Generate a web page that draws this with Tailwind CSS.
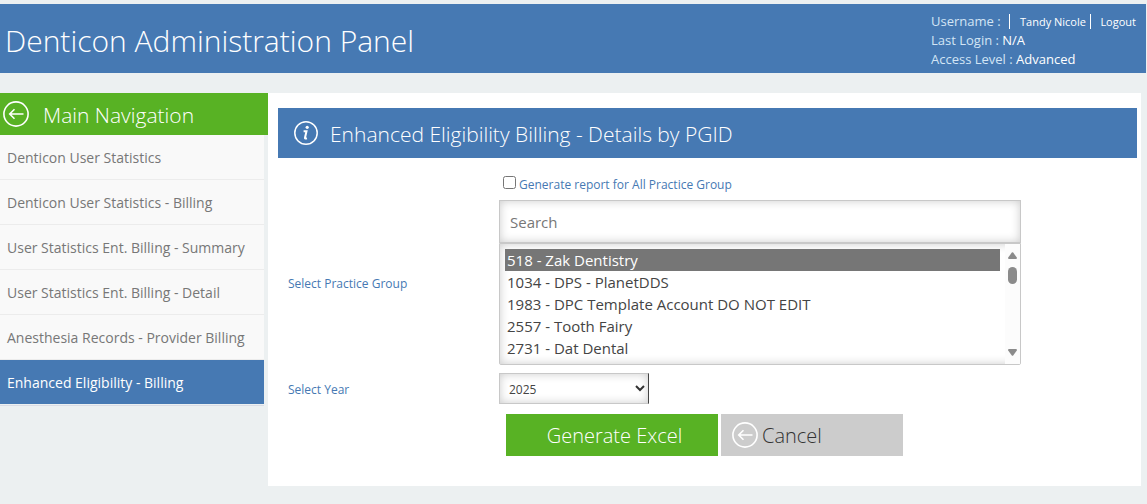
<!DOCTYPE html>
<html lang="en">
<head>
  <meta charset="UTF-8" />
  <meta name="viewport" content="width=device-width, initial-scale=1.0" />
  <title>Denticon Administration Panel</title>
  <script src="https://cdn.jsdelivr.net/npm/@tailwindcss/browser@4"></script>
</head>
<body class="bg-[#ecf0f1] pt-1 min-h-screen font-['Open_Sans',sans-serif] text-[#444]">

  <!-- Header -->
  <header class="flex items-center justify-between bg-[#4679b3] text-white h-[69px] mr-px pl-[5px] pr-[10px]">
    <h1 class="text-[30px] leading-10 font-light pt-1">Denticon Administration Panel</h1>
    <div class="w-[205px] shrink-0 pt-[3px] text-[13px] leading-[19px] text-[#d3e5f5] whitespace-nowrap">
      <div class="flex items-center">
        <span class="w-[78px]">Username :</span>
        <a href="#" class="border-l border-white pl-[10px] text-[11px] leading-[15px] text-white">Tandy Nicole</a>
        <a href="#" class="border-l border-white pl-[9px] ml-auto text-[11px] leading-[15px] text-white">Logout</a>
      </div>
      <div>Last Login : <span class="text-white">N/A</span></div>
      <div>Access Level : <span class="text-white">Advanced</span></div>
    </div>
  </header>

  <div class="flex items-start mt-5 mr-[6px]">

    <!-- Sidebar -->
    <aside class="w-[268px] shrink-0">
      <div class="flex items-center h-[42px] bg-[#58b224] text-white pl-[3px] gap-[14px]">
        <svg class="size-[26px]" viewBox="0 0 26 26" fill="none" stroke="currentColor" stroke-width="1.6">
          <circle cx="13" cy="13" r="12.1" />
          <path d="M20.5 13H7M11.5 8.2L6.7 13l4.8 4.8" />
        </svg>
        <h2 class="text-[21px] leading-7 font-light pt-[2px]">Main Navigation</h2>
      </div>
      <nav class="mr-1 text-[14px] text-[#777] whitespace-nowrap">
        <a href="#" class="flex items-center h-[45px] pl-[7px] bg-[#f9f9f9] border-b border-[#ececec]">Denticon User Statistics</a>
        <a href="#" class="flex items-center h-[45px] pl-[7px] bg-[#f9f9f9] border-b border-[#ececec]">Denticon User Statistics - Billing</a>
        <a href="#" class="flex items-center h-[45px] pl-[7px] bg-[#f9f9f9] border-b border-[#ececec]">User Statistics Ent. Billing - Summary</a>
        <a href="#" class="flex items-center h-[45px] pl-[7px] bg-[#f9f9f9] border-b border-[#ececec]">User Statistics Ent. Billing - Detail</a>
        <a href="#" class="flex items-center h-[45px] pl-[7px] bg-[#f9f9f9] border-b border-[#ececec]">Anesthesia Records - Provider Billing</a>
        <a href="#" class="flex items-center h-[44px] pl-[7px] bg-[#4679b3] text-white">Enhanced Eligibility - Billing</a>
        <div class="mt-px h-px bg-[#d9dce5]"></div>
      </nav>
    </aside>

    <!-- Content -->
    <main class="flex-1 bg-white pt-[15px] pl-[10px] pr-1 pb-[30px]">
      <div class="flex items-center h-[50px] bg-[#4679b3] text-white pl-4 gap-3">
        <svg class="size-6" viewBox="0 0 24 24" fill="none" stroke="currentColor">
          <circle cx="12" cy="12" r="11.2" stroke-width="1.5" />
          <circle cx="13.2" cy="6.3" r="1.6" fill="currentColor" stroke="none" />
          <path d="M9.6 10.2h2.9l-1.5 6.6q-.2 1.2 1.9.4" stroke-width="2" />
        </svg>
        <h2 class="text-[21px] leading-7 font-light pt-[2px]">Enhanced Eligibility Billing - Details by PGID</h2>
      </div>

      <form class="pl-[10px] mt-[15px] text-[12px] text-[#4679b3]">
        <div class="flex items-center h-[27px] pl-[215px] pb-1">
          <input type="checkbox" id="all-groups" class="size-[13px] mb-1" />
          <label for="all-groups" class="pl-[3px]">Generate report for All Practice Group</label>
        </div>

        <div class="flex items-center">
          <label for="practice-group" class="w-[211px] shrink-0 pt-[2px]">Select Practice Group</label>
          <div class="w-[522px]">
            <input type="text" placeholder="Search" aria-label="Search" class="block w-full h-[43px] border border-[#c8c8c8] pl-[10px] text-[15px] text-[#444] placeholder:text-[#777] shadow-[inset_0_0_10px_#ccc]" />
            <div class="relative">
              <select id="practice-group" size="5" class="block w-full h-[122px] border border-[#c8c8c8] rounded-b-[2px] py-[5px] pl-[5px] pr-5 text-[15px] text-[#444] shadow-[inset_0_0_10px_#ccc] overflow-hidden">
                <option selected class="h-[22px] leading-[22px] p-0 pt-px pl-[2px] checked:bg-[linear-gradient(#767676,#767676)] checked:text-white">518 - Zak Dentistry</option>
                <option class="h-[22px] leading-[22px] p-0 pt-px pl-[2px]">1034 - DPS - PlanetDDS</option>
                <option class="h-[22px] leading-[22px] p-0 pt-px pl-[2px]">1983 - DPC Template Account DO NOT EDIT</option>
                <option class="h-[22px] leading-[22px] p-0 pt-px pl-[2px]">2557 - Tooth Fairy</option>
                <option class="h-[22px] leading-[22px] p-0 pt-px pl-[2px]">2731 - Dat Dental</option>
              </select>
              <!-- scrollbar -->
              <div class="absolute inset-y-px right-px w-[15px] bg-[#fcfcfc] flex flex-col items-center pt-2 pb-2">
                <svg class="w-[9px] h-[7px]" viewBox="0 0 9 7" fill="#8b8b8b"><path d="M3.8.6q.7-.9 1.4 0L8.8 5.6q.4 1.4-.8 1.4H1Q-.2 7 .2 5.6z" /></svg>
                <div class="mt-2 w-[9px] h-[17px] rounded-full bg-[#8b8b8b]"></div>
                <svg class="mt-auto w-[9px] h-[7px]" viewBox="0 0 9 7" fill="#8b8b8b"><path d="M3.8 6.4q.7.9 1.4 0L8.8 1.4Q9.2 0 8 0H1Q-.2 0 .2 1.4z" /></svg>
              </div>
            </div>
          </div>
        </div>

        <div class="flex items-center mt-2">
          <label for="year" class="w-[211px] shrink-0 pt-[2px]">Select Year</label>
          <div class="relative w-[150px]">
            <select id="year" class="block appearance-none w-full h-[31px] border border-[#c8c8c8] border-r-[#444] pt-[2px] pl-[9px] text-[12px] text-[#444] shadow-[inset_0_0_10px_#ccc]">
              <option>2025</option>
            </select>
            <svg class="absolute right-1 top-3 w-[10px] h-[7px] pointer-events-none" viewBox="0 0 10 7" fill="none" stroke="#333" stroke-width="2"><path d="M1 1l4 4 4-4" /></svg>
          </div>
        </div>

        <div class="flex gap-[3px] mt-[10px] pl-[218px] text-[20px] font-light">
          <button type="button" class="w-[212px] h-[42px] bg-[#58b224] text-white pl-[5px] pt-[2px]">Generate Excel</button>
          <button type="button" class="flex items-center w-[182px] h-[42px] bg-[#ccc] text-[#333] pl-[11px] gap-1">
            <svg class="size-[26px] text-white" viewBox="0 0 26 26" fill="none" stroke="currentColor" stroke-width="1.6">
              <circle cx="13" cy="13" r="12.1" />
              <path d="M20.5 13H7M11.5 8.2L6.7 13l4.8 4.8" />
            </svg>
            <span class="pt-[2px]">Cancel</span>
          </button>
        </div>
      </form>
    </main>
  </div>
</body>
</html>
